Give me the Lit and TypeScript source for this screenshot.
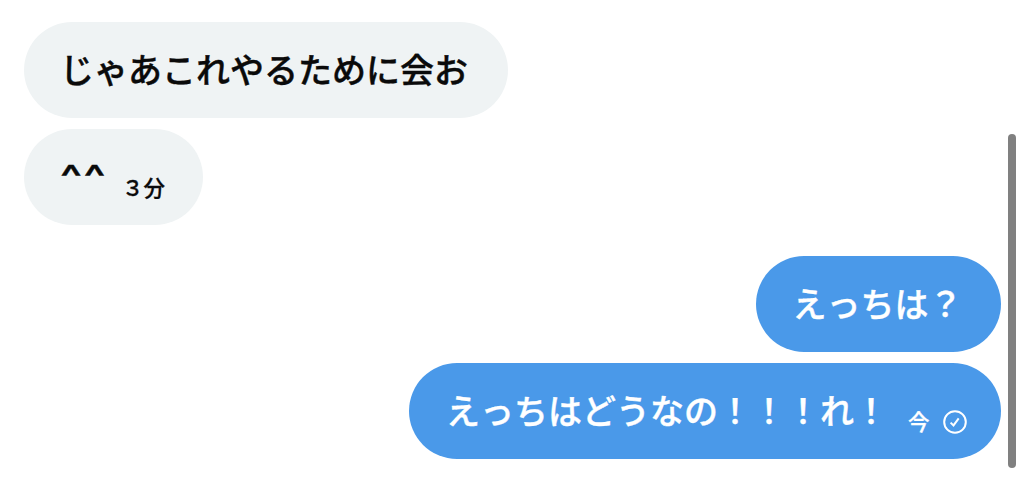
import { LitElement, css, html, nothing } from "lit";
import { customElement, property } from "lit/decorators.js";

interface Message {
  text: string
  mine: boolean
  time?: string
  last?: boolean
}

const messages: Array<Message> = [
  { text: 'じゃあこれやるために会お', mine: false },
  { text: '^^', mine: false, time: '３分', last: true },
  { text: 'えっちは？', mine: true },
  { text: 'えっちはどうなの！！！れ！', mine: true, time: '今' },
]


@customElement('chat-bubble')
export class ChatBubble extends LitElement {

  static styles = css`
    :host {
      display: block;
    }

    .bubble {
      box-sizing: border-box;
      height: 96px;
      padding: 0 40px 0 36.5px;
      border-radius: 48px;
      display: flex;
      align-items: center;
      white-space: nowrap;
      background-color: #eff3f4;
      color: #0a0a0a;
      -webkit-text-stroke: 0.4px currentColor;
    }

    .bubble.timed {
      padding-right: 38px;
    }

    .bubble.mine {
      padding: 0 38px 0 37px;
      background-color: #4a99e9;
      color: #ffffff;
    }

    .bubble.mine.timed {
      padding-right: 34px;
    }

    .text {
      margin-bottom: 3px;
      font-size: 34px;
      line-height: 50px;
      font-weight: 500;
    }

    /* latin carets are narrow next to kana */
    .face {
      width: 45px;
      margin-bottom: 0;
      font-family: Inter, sans-serif;
      letter-spacing: 1px;
      transform: scaleX(1.36);
      transform-origin: left;
    }

    .meta {
      display: flex;
      align-items: center;
      gap: 13px;
      margin: 20px 0 0 17px;
      font-size: 21.5px;
      line-height: 30px;
      font-weight: 500;
      -webkit-text-stroke-width: 0.3px;
    }

    .mine .meta {
      margin-left: 20px;
    }

    .check {
      display: block;
      width: 24px;
      height: 24px;
      margin-top: 1px;
    }
  `

  @property()
  text = ''

  @property()
  time = ''

  @property({ type: Boolean })
  mine = false

  private renderCheck() {
    return html`
      <svg class="check" viewBox="0 0 24 24" fill="none" stroke="currentColor" stroke-width="2">
        <circle cx="12" cy="12" r="10.8"></circle>
        <path d="M7.6 12.6l2.9 2.8 5.2-7"></path>
      </svg>
    `
  }

  render() {
    return html`
      <div class=${`${this.mine ? 'mine' : ''} ${this.time ? 'timed' : ''} bubble`}>
        <span class=${`${this.text === '^^' ? 'face' : ''} text`}>${this.text}</span>
        ${this.time ? html`
          <span class="meta">${this.time}${this.mine ? this.renderCheck() : nothing}</span>
        ` : nothing}
      </div>
    `
  }
}


@customElement('app-root')
export class AppRoot extends LitElement {

  static styles = css`
    :host {
      display: flex;
      box-sizing: border-box;
      width: 1024px;
      height: 496px;
      overflow: hidden;
      background-color: #ffffff;
      font-family: "Noto Sans CJK JP", sans-serif;
    }

    .messages {
      flex: 1;
      display: flex;
      flex-direction: column;
      align-items: flex-start;
      gap: 10.7px;
      padding: 22px 0 0 23.5px;
    }

    .mine {
      align-self: flex-end;
    }

    .last {
      margin-bottom: 21px;
    }

    .scroll-track {
      width: 23.5px;
      padding-left: 7.5px;
      box-sizing: border-box;
    }

    .scroll-thumb {
      width: 8px;
      height: 334px;
      margin-top: 133.5px;
      border-radius: 4px;
      background-color: #808080;
    }
  `

  render() {
    return html`
      <div class="messages">
        ${messages.map((item) => html`
          <chat-bubble
            class=${`${item.mine ? 'mine' : ''} ${item.last ? 'last' : ''}`}
            .text=${item.text}
            .time=${item.time ?? ''}
            ?mine=${item.mine}
          ></chat-bubble>
        `)}
      </div>
      <div class="scroll-track">
        <div class="scroll-thumb"></div>
      </div>
    `
  }
}
